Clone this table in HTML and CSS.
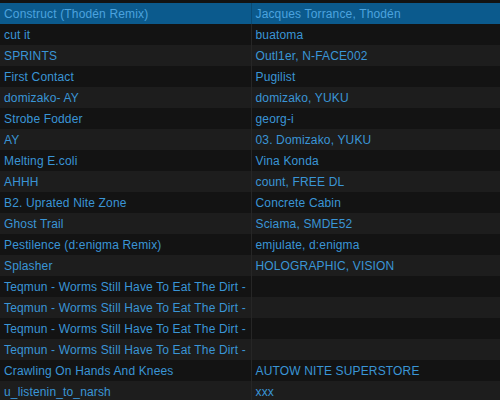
FILE: index.html
```html
<!doctype html>
<html lang="en">
  <head>
    <meta charset="UTF-8" />
    <title>Tracks</title>
    <link rel="stylesheet" href="styles.css">
  </head>
  <body>
    <table class="track-list">
      <colgroup>
        <col class="col-title" />
        <col class="col-artist" />
      </colgroup>
      <tbody>
        <tr class="selected"><td>Construct (Thodén Remix)</td><td>Jacques Torrance, Thodén</td></tr>
        <tr><td>cut it</td><td>buatoma</td></tr>
        <tr><td>SPRINTS</td><td>Outl1er, N-FACE002</td></tr>
        <tr><td>First Contact</td><td>Pugilist</td></tr>
        <tr><td>domizako- AY</td><td>domizako, YUKU</td></tr>
        <tr><td>Strobe Fodder</td><td>georg-i</td></tr>
        <tr><td>AY</td><td>03. Domizako, YUKU</td></tr>
        <tr><td>Melting E.coli</td><td>Vina Konda</td></tr>
        <tr><td>AHHH</td><td>count, FREE DL</td></tr>
        <tr><td>B2. Uprated Nite Zone</td><td>Concrete Cabin</td></tr>
        <tr><td>Ghost Trail</td><td>Sciama, SMDE52</td></tr>
        <tr><td>Pestilence (d:enigma Remix)</td><td>emjulate, d:enigma</td></tr>
        <tr><td>Splasher</td><td>HOLOGRAPHIC, VISION</td></tr>
        <tr><td>Teqmun - Worms Still Have To Eat The Dirt -</td><td></td></tr>
        <tr><td>Teqmun - Worms Still Have To Eat The Dirt -</td><td></td></tr>
        <tr><td>Teqmun - Worms Still Have To Eat The Dirt -</td><td></td></tr>
        <tr><td>Teqmun - Worms Still Have To Eat The Dirt -</td><td></td></tr>
        <tr><td>Crawling On Hands And Knees</td><td>AUTOW NITE SUPERSTORE</td></tr>
        <tr><td>u_listenin_to_narsh</td><td>xxx</td></tr>
      </tbody>
    </table>
  </body>
</html>
```

FILE: styles.css
```css
* {
  margin: 0;
  padding: 0;
  box-sizing: border-box;
}

body {
  font-family: 'Liberation Sans', Arial, sans-serif;
  font-size: 12px;
  letter-spacing: 0.15px;
  background: #131313;
  padding-top: 3px;
  overflow: hidden;
}

.track-list {
  width: 500px;
  border-collapse: collapse;
  table-layout: fixed;
  color: #3a95d6;
}

.col-title {
  width: 251px;
}

.track-list tr {
  height: 21px;
  background: #131313;
}

.track-list tr:nth-child(odd) {
  background: #1d1d1d;
}

.track-list td {
  padding: 0 4px;
  white-space: nowrap;
  overflow: hidden;
  vertical-align: middle;
}

.track-list td:first-child {
  border-right: 1px solid #262626;
}

.track-list tr.selected {
  background: #0b5a8d;
  color: #4ba3df;
}

.track-list tr.selected td:first-child {
  border-right-color: #0a4a74;
}
```
